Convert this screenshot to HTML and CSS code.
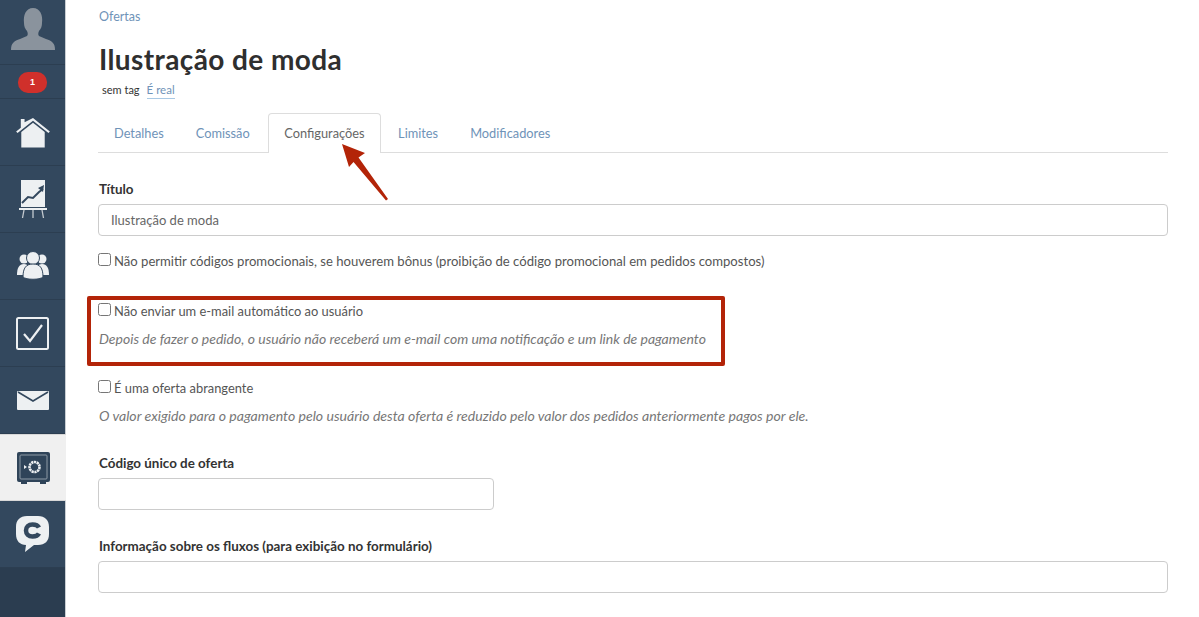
FILE: index.html
```html
<!DOCTYPE html>
<html lang="pt">
<head>
<meta charset="utf-8">
<title>Ilustração de moda</title>
<link rel="stylesheet" href="styles.css">
</head>
<body>
<div class="app">
  <nav class="side">
    <a class="item avatar"><svg width="46" height="44" viewBox="0 0 46 44"><path fill="#8a939d" d="M1 42c0-7 3-9 9-11l7-3c1-1 1-3 0-5-2-2-3-5-3-8C13 7 16 0 23 0s10 7 9 15c0 3-1 6-3 8-1 2-1 4 0 5l7 3c6 2 9 4 9 11z"/></svg></a>
    <a class="item badge-row"><span class="badge">1</span></a>
    <a class="item home"><svg width="34" height="30" viewBox="0 0 36 32"><path fill="#edf0f2" d="M5 1h4v3.500L18 0l18 14.500-1.500 1.500L18 3 1.500 16 0 14.500l5-4z"/><path fill="#edf0f2" d="M5.500 15 18 5l12.500 10v16.500h-25z"/></svg></a>
    <a class="item"><svg width="28" height="38" viewBox="0 0 28 38"><path fill="#edf0f2" d="M2 0h24v27H2z"/><path fill="none" stroke="#33485e" stroke-width="2" d="M3 23l6-6 5 1 6-6 4-3"/><path fill="#33485e" d="M25 5l-1 7-5-4z"/><path fill="#edf0f2" d="M0 28h28v2H0z"/><path stroke="#c3c9cf" stroke-width="1.300" d="M5 30l-1.500 8M14 30v8M23 30l1.500 8"/></svg></a>
    <a class="item"><svg width="34" height="30" viewBox="0 0 34 30"><g fill="#edf0f2"><circle cx="8" cy="8" r="4.500"/><circle cx="26" cy="8" r="4.500"/><path d="M1 24c0-7 2-11 7-11 2 0 3 1 3 1l-2 10z"/><path d="M33 24c0-7-2-11-7-11-2 0-3 1-3 1l2 10z"/><circle cx="17" cy="7" r="6.500" stroke="#33485e" stroke-width="1"/><path stroke="#33485e" stroke-width="1" d="M7 26c0-9 3-13 10-13s10 4 10 13c-3 3-17 3-20 0z"/></g></svg></a>
    <a class="item"><svg width="33" height="33" viewBox="0 0 33 33"><rect x="1" y="1" width="31" height="31" rx="1.500" fill="none" stroke="#edf0f2" stroke-width="2"/><path fill="none" stroke="#edf0f2" stroke-width="2.200" d="M8 17l6 7L26 8"/></svg></a>
    <a class="item"><svg width="32" height="19" viewBox="0 0 32 19"><rect width="32" height="19" rx="1" fill="#edf0f2"/><path fill="none" stroke="#33485e" stroke-width="1.600" d="M1 1l15 9 15-9"/></svg></a>
    <a class="item active"><svg width="33" height="32" viewBox="0 0 33 32"><rect width="33" height="30" rx="2" fill="#2f4459"/><path fill="#2f4459" d="M4 29h6v3H4zM23 29h6v3h-6z"/><rect x="3" y="3" width="27" height="24" rx="1" fill="none" stroke="#8e9aa6"/><circle cx="17.500" cy="15" r="5" fill="none" stroke="#edf0f2" stroke-width="2.600" stroke-dasharray="2.200 .6"/><path fill="#edf0f2" d="M7 13l3 2-3 2z"/></svg></a>
    <a class="item"><svg width="33" height="36" viewBox="0 0 33 36"><path fill="#edf0f2" d="M11 0h11c7 0 11 4 11 11v7c0 7-4 11-11 11h-4l-9 7 1-7C4 29 0 25 0 18v-7C0 4 4 0 11 0z"/><path fill="none" stroke="#33485e" stroke-width="4.500" d="M23 11.500c-1-2-3-3-6.500-3-4 0-6.500 2.500-6.500 6s2.500 6 6.500 6c3.500 0 5.500-1 6.500-3"/></svg></a>
  </nav>
  <main class="main">
    <a class="crumb">Ofertas</a>
    <h1>Ilustração de moda</h1>
    <div class="tags"><span class="tag">sem tag</span><a class="real">É real</a></div>
    <ul class="tabs">
      <li>Detalhes</li>
      <li>Comissão</li>
      <li class="on">Configurações</li>
      <li>Limites</li>
      <li>Modificadores</li>
    </ul>
    <label class="lbl first">Título</label>
    <input class="field" type="text" value="Ilustração de moda">
    <div class="check c1"><input type="checkbox"><span>Não permitir códigos promocionais, se houverem bônus (proibição de código promocional em pedidos compostos)</span></div>
    <div class="check c2"><input type="checkbox"><span>Não enviar um e-mail automático ao usuário</span></div>
    <p class="hint h2">Depois de fazer o pedido, o usuário não receberá um e-mail com uma notificação e um link de pagamento</p>
    <div class="check c3"><input type="checkbox"><span>É uma oferta abrangente</span></div>
    <p class="hint h3">O valor exigido para o pagamento pelo usuário desta oferta é reduzido pelo valor dos pedidos anteriormente pagos por ele.</p>
    <label class="lbl l2">Código único de oferta</label>
    <input class="field short" type="text">
    <label class="lbl l3">Informação sobre os fluxos (para exibição no formulário)</label>
    <input class="field" type="text">
  </main>
</div>
<div class="redbox"></div>
<svg class="arrow" width="60" height="70" viewBox="0 0 60 70"><path fill="#b32408" d="M1 0l23 9-6.500 4.500L47 55l-2 1.500L12.500 18 8 23z"/></svg>
</body>
</html>
```
FILE: styles.css
```css
* { box-sizing: border-box; }
html, body { margin: 0; height: 617px; overflow: hidden; background: #fff; }
body { font-family: Lato, "Open Sans", sans-serif; color: #333; position: relative; }
.app { display: flex; height: 617px; }
.side { width: 66px; flex: none; background: #2b3d50; border-right: 1px solid #c9ced3; }
.item { display: flex; align-items: center; justify-content: center; height: 67px; background: #33485e; border-bottom: 1px solid #2c3e51; }
.avatar { height: 65px; padding-top: 8px; align-items: flex-start; }
.badge-row { height: 34px; padding-top: 2px; }
.home { padding-top: 2px; }
.badge { width: 29px; height: 21px; border-radius: 10px; background: #d0302b; color: #fff; font: bold 9px/21px "Liberation Sans", sans-serif; text-align: center; }
.active { background: #f0f0f0; border-bottom: 1px solid #d8d8d8; border-top: 1px solid #d8d8d8; margin-right: -1px; }
.main { flex: 1; padding: 0 31px 0 32px; min-width: 0; }
.crumb { display: block; margin: 9px 0 0 1px; font-size: 12.500px; line-height: 16px; color: #6f93b8; }
h1 { margin: 16px 0 0 1px; font-size: 28px; line-height: 36px; font-weight: 700; color: #2f2f2f; letter-spacing: .4px; }
.tags { display: flex; margin: 5px 0 0 4px; font-size: 11px; line-height: 16px; height: 17px; }
.tag { color: #333; }
.real { margin-left: 7px; font-size: 11.500px; color: #6f93b8; border-bottom: 1px solid #a9c9e4; }
.tabs { display: flex; list-style: none; margin: 14px 0 0; padding: 0; height: 40px; border-bottom: 1px solid #ddd; }
.tabs li { padding: 0 15px; font-size: 12.800px; line-height: 38px; color: #6f93b8; border: 1px solid transparent; border-bottom: 0; height: 40px; white-space: nowrap; }
.tabs .on { margin: 0 1px 0 2px; padding: 0 15.500px; color: #666; background: #fff; border-color: #ddd; border-radius: 4px 4px 0 0; }
.lbl { display: block; margin-left: 1px; font-size: 13.400px; line-height: 18px; font-weight: 700; color: #333; }
.first { margin-top: 27px; }
.field { display: block; width: 100%; height: 32px; margin-top: 6px; padding: 0 12px; border: 1px solid #ccc; border-radius: 4px; font: 13px Lato, sans-serif; color: #666; background: #fff; }
.short { width: 396px; }
.check { display: flex; align-items: flex-start; font-size: 12.900px; line-height: 18px; color: #555; }
.check input { width: 13px; height: 13px; margin: 1px 3px 0 0; flex: none; }
.c1 { margin-top: 16px; font-size: 13.100px; }
.c2 { margin-top: 32px; }
.c3 { margin-top: 31px; }
.hint { margin: 0 0 0 1px; font-size: 14px; line-height: 18px; font-style: italic; color: #777; }
.h2 { margin-top: 10px; }
.h3 { margin-top: 10px; font-size: 14.100px; }
.l2 { margin-top: 29px; }
.l3 { margin-top: 27px; }
.redbox { position: absolute; left: 87px; top: 296px; width: 638px; height: 70px; border: 4px solid #b32408; border-radius: 2px; }
.arrow { position: absolute; left: 341px; top: 144px; }
```
